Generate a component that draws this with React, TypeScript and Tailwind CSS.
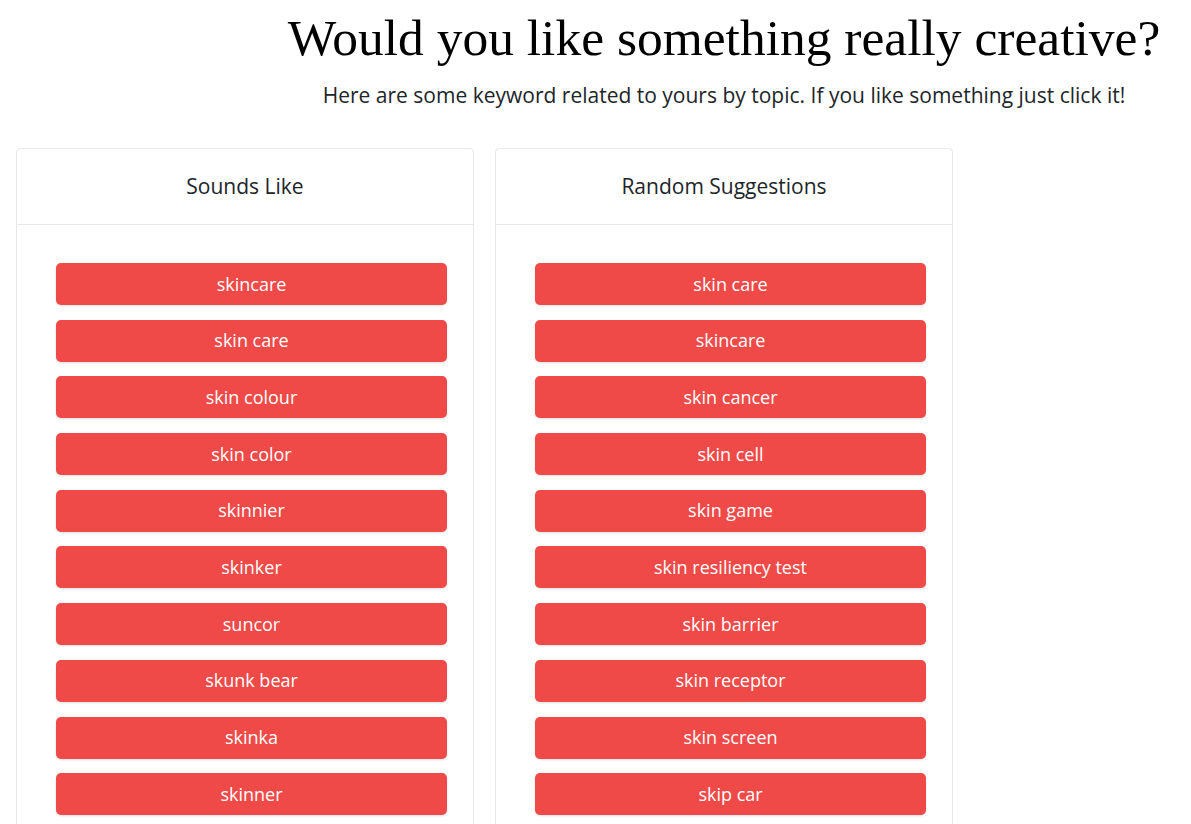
import React from "react";

const SOUNDS_LIKE = [
  "skincare",
  "skin care",
  "skin colour",
  "skin color",
  "skinnier",
  "skinker",
  "suncor",
  "skunk bear",
  "skinka",
  "skinner",
];

const RANDOM = [
  "skin care",
  "skincare",
  "skin cancer",
  "skin cell",
  "skin game",
  "skin resiliency test",
  "skin barrier",
  "skin receptor",
  "skin screen",
  "skip car",
];

function KeywordCard({ title, words }: { title: string; words: string[] }) {
  return (
    <div className="w-[458px] rounded-[4px] border border-[#e6e8ea] bg-white">
      <div className="h-[76px] flex items-center justify-center border-b border-[#e6e8ea] text-[21px] font-medium text-[#212529]">
        {title}
      </div>
      <div className="pt-[38px] pb-[40px] pl-[39px] pr-[26px] flex flex-col gap-[14.7px]">
        {words.map((w) => (
          <button
            key={w}
            type="button"
            className="h-[42px] w-full rounded-[5px] bg-[#ef4a48] text-white text-[18px] shadow-sm"
          >
            {w}
          </button>
        ))}
      </div>
    </div>
  );
}

export default function App() {
  return (
    <div className="min-h-screen bg-white font-['Open_Sans',sans-serif] overflow-hidden">
      {/* Heading */}
      <div className="pl-[257px] text-center">
        <h1 className="pt-[5px] text-[51.5px] leading-[66px] text-black font-['Liberation_Serif',serif]">
          Would you like something really creative?
        </h1>
        <p className="mt-[10px] text-[21px] leading-[28px] text-[#212529]">
          Here are some keyword related to yours by topic. If you like something just click it!
        </p>
      </div>

      {/* Cards */}
      <div className="mt-[39px] pl-[16px] flex gap-[21px] items-start">
        <KeywordCard title="Sounds Like" words={SOUNDS_LIKE} />
        <KeywordCard title="Random Suggestions" words={RANDOM} />
      </div>
    </div>
  );
}
